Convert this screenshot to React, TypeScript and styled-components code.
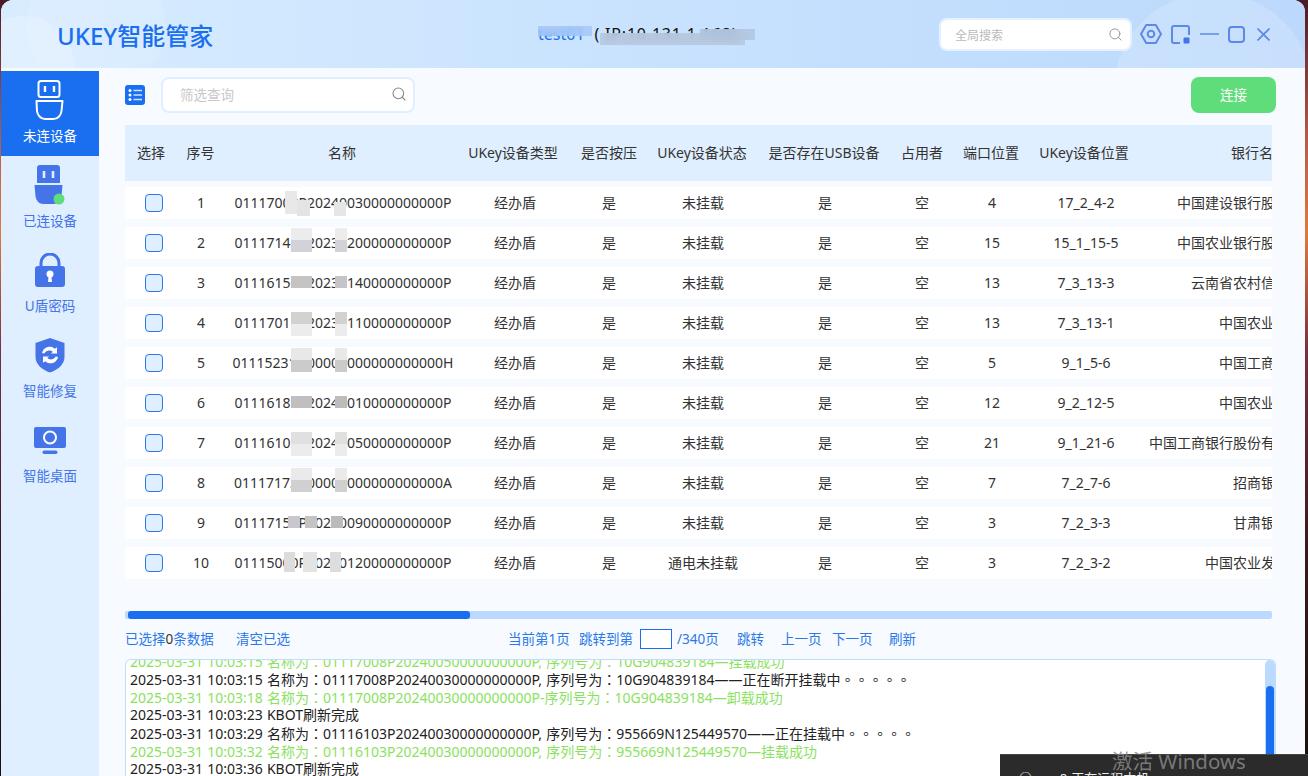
import styled, { createGlobalStyle } from "styled-components";
import { Search } from "lucide-react";

const BLUE = "#1a6ff0";
const ICON = "#4474e8";
const PALE = "#e0efff";
const FONT = `"Noto Sans", "Noto Sans CJK SC", sans-serif`;
const HEAD_COLUMNS = "52px 47px 236px 106px 86px 100px 144px 52px 86px 100px 250px";
const ROW_COLUMNS = "52px 48px 236px 108px 80px 108px 136px 58px 82px 106px 244px";

const GlobalStyle = createGlobalStyle`
  html, body { margin: 0; padding: 0; }
  body { font-family: ${FONT}; font-size: 14px; color: #333; overflow: hidden; }
`;

const Desktop = styled.div`
  position: relative;
  width: 1308px;
  height: 776px;
  overflow: hidden;
  padding: 0 3px 0 1px;
  box-sizing: border-box;
  background: linear-gradient(180deg, #4a1a28 0%, #b85a4a 18%, #e07a3a 30%, #7a3040 45%, #3a1a20 70%, #1a1008 100%);
`;

const AppWindow = styled.div`
  display: flex;
  flex-direction: column;
  height: 100%;
  overflow: hidden;
  border-radius: 12px 12px 0 0;
  background: #f7fbff;
`;

const Header = styled.header`
  flex: 0 0 68px;
  display: flex;
  align-items: center;
  padding-left: 56px;
  background:
    radial-gradient(circle 100px at 1212px 92px, rgba(255, 255, 255, 0.16) 99%, transparent),
    radial-gradient(circle 52px at 22px 68px, rgba(255, 255, 255, 0.2) 99%, transparent),
    radial-gradient(circle 70px at 95px 26px, rgba(255, 255, 255, 0.12) 99%, transparent),
    linear-gradient(90deg, #d8ecff 0%, #c8e2fe 50%, #bcd9fc 100%);
`;

const Logo = styled.div`
  width: 481px;
  font-size: 24px;
  font-weight: 500;
  color: ${BLUE};
  white-space: nowrap;
`;

const HostTitle = styled.div`
  position: relative;
  width: 401px;
  font-size: 16px;
  line-height: 22px;
  color: #111;
  white-space: nowrap;
  span { color: ${BLUE}; margin-right: 10px; }
  em { font-style: normal; letter-spacing: 0.8px; }
`;

const TitleBlur = styled.i<{ $x: number; $y: number; $w: number; $h: number; $c: string }>`
  position: absolute;
  left: ${(p) => p.$x}px;
  top: ${(p) => p.$y}px;
  width: ${(p) => p.$w}px;
  height: ${(p) => p.$h}px;
  background: ${(p) => p.$c};
  backdrop-filter: blur(3px);
`;

const WindowTools = styled.div`
  display: flex;
  align-items: center;
`;

const GlobalSearch = styled.div`
  box-sizing: border-box;
  width: 193px;
  height: 33px;
  display: flex;
  align-items: center;
  justify-content: space-between;
  padding: 0 7px 0 14px;
  margin-top: 1px;
  margin-right: 8px;
  background: #fff;
  border: 2px solid #e6f1ff;
  border-radius: 8px;
  font-size: 12px;
  color: #bbb;
`;

const TopIcon = styled.svg<{ $mr: number }>`
  display: block;
  margin-right: ${(p) => p.$mr}px;
  fill: none;
  stroke: #5b88ea;
  stroke-width: 2;
`;

const Body = styled.div`
  flex: 1;
  display: flex;
  min-height: 0;
`;

const Sidebar = styled.nav`
  flex: 0 0 98px;
  margin-top: 3px;
  background: ${PALE};
`;

const NavItem = styled.div<{ $active?: boolean }>`
  height: 85px;
  display: grid;
  grid-template-rows: 58px auto;
  align-content: start;
  justify-items: center;
  align-items: center;
  font-size: 13.5px;
  line-height: 14px;
  color: ${(p) => (p.$active ? "#fff" : ICON)};
  background: ${(p) => (p.$active ? BLUE : "transparent")};
`;

const Main = styled.main`
  flex: 1;
  min-width: 0;
  padding: 9px 0 0 26px;
`;

const Toolbar = styled.div`
  width: 1151px;
  height: 36px;
  display: flex;
  align-items: center;
  gap: 16px;
`;

const FilterSearch = styled.div`
  box-sizing: border-box;
  width: 254px;
  height: 36px;
  display: flex;
  align-items: center;
  justify-content: space-between;
  padding: 0 6px 2px 17px;
  background: #fff;
  border: 2px solid ${PALE};
  border-radius: 8px;
  color: #c8c8c8;
  font-size: 13.5px;
`;

const ConnectButton = styled.button`
  margin-left: auto;
  width: 85px;
  height: 36px;
  padding: 0 0 2px;
  border: 0;
  border-radius: 8px;
  background: #5fdd7b;
  color: #fff;
  font-family: ${FONT};
  font-size: 13.5px;
`;

const TableClip = styled.div`
  width: 1147px;
  margin-top: 12px;
  overflow: hidden;
`;

const HeadRow = styled.div`
  width: 1259px;
  height: 56px;
  display: grid;
  grid-template-columns: ${HEAD_COLUMNS};
  align-items: center;
  justify-items: center;
  background: ${PALE};
  margin-bottom: 6px;
  white-space: nowrap;
  span { padding-bottom: 2px; }
`;

const Row = styled.div`
  position: relative;
  width: 1259px;
  height: 32px;
  display: grid;
  grid-template-columns: ${ROW_COLUMNS};
  align-items: center;
  justify-items: center;
  background: #fff;
  margin-bottom: 8px;
  white-space: nowrap;
  span { padding-bottom: 2px; }
`;

const Check = styled.input.attrs({ type: "checkbox" })`
  appearance: none;
  box-sizing: border-box;
  width: 18px;
  height: 18px;
  margin: 0 0 0 6px;
  background: ${PALE};
  border: 1.5px solid #2a78e8;
  border-radius: 4px;
`;

const Smudge = styled.i<{ $x: number; $y: number; $w: number; $h: number; $c: string }>`
  position: absolute;
  left: ${(p) => p.$x - 125}px;
  top: ${(p) => p.$y}px;
  width: ${(p) => p.$w}px;
  height: ${(p) => p.$h}px;
  background: ${(p) => p.$c};
`;

const HScrollTrack = styled.div`
  width: 1147px;
  height: 8px;
  margin-top: 24px;
  border-radius: 2px;
  background: #bcd9ff;
  padding-left: 3px;
  box-sizing: border-box;
`;

const HScrollThumb = styled.div`
  width: 342px;
  height: 100%;
  border-radius: 3px;
  background: ${BLUE};
`;

const Footer = styled.div`
  height: 20px;
  margin-top: 10px;
  display: flex;
  align-items: center;
  white-space: nowrap;
  color: #2a78e8;
  font-size: 13.5px;
`;

const FooterText = styled.span<{ $w: number }>`
  flex: 0 0 ${(p) => p.$w}px;
  padding-bottom: 2px;
  b { font-weight: 400; color: #333; }
`;

const PageInput = styled.input`
  box-sizing: border-box;
  flex: 0 0 32px;
  width: 32px;
  height: 20px;
  margin-right: 5px;
  border: 1.5px solid ${BLUE};
  background: #fff;
  padding: 0;
`;

const LogPanel = styled.div`
  position: relative;
  box-sizing: border-box;
  width: 1151px;
  height: 120px;
  margin-top: 10px;
  overflow: hidden;
  background: #fff;
  border: 1px solid #c0dcff;
  border-bottom: 0;
  border-radius: 6px 6px 0 0;
`;

const LogList = styled.div`
  margin: -8px 0 0 4px;
  white-space: nowrap;
  word-spacing: 0.5px;
`;

const LogLine = styled.div<{ $ok?: boolean }>`
  height: 18px;
  line-height: 18px;
  font-size: 14px;
  color: ${(p) => (p.$ok ? "#8ae25f" : "#222")};
`;

// 全角标点在参考图里是居中的，繁中字形才是这样
const Mark = styled.span`
  font-family: "Noto Sans CJK TC", sans-serif;
`;

const LogTrack = styled.div`
  position: absolute;
  top: 0;
  right: 0;
  bottom: 0;
  width: 10px;
  background: #bcd9ff;
  border-radius: 5px 5px 0 0;
`;

const LogThumb = styled.div`
  position: absolute;
  top: 26px;
  left: 1px;
  right: 1px;
  bottom: 0;
  border-radius: 4px;
  background: ${BLUE};
`;

const RemoteToast = styled.div`
  position: absolute;
  left: 1000px;
  right: 0;
  top: 754px;
  bottom: 0;
  overflow: hidden;
  padding: 13px 0 0 19px;
  background: #2b2b2b;
  border-top: 1px solid #444;
  box-sizing: border-box;
  color: #eee;
  font-size: 13px;
  line-height: 20px;
  word-spacing: 7px;
`;

const Watermark = styled.div`
  position: absolute;
  left: 1112px;
  top: 747px;
  font-size: 20.5px;
  line-height: 28px;
  color: rgba(136, 136, 136, 0.85);
  white-space: nowrap;
  pointer-events: none;
`;

function PlugOutline() {
  return (
    <svg width="34" height="42" viewBox="0 0 34 42" fill="none" stroke="#fff" strokeWidth="2">
      <rect x="5.5" y="2" width="21" height="16" rx="2.5" />
      <path d="M12 7v6M21 7v6" strokeWidth="2.4" />
      <path d="M3.5 22h26l-1 10c-.4 4-3.4 8-8 8h-8.5c-4.5 0-7.500-4-8-8z" strokeLinejoin="round" />
    </svg>
  );
}

function PlugFilled() {
  return (
    <svg width="36" height="42" viewBox="0 0 36 42">
      <path d="M8 1h17a3 3 0 0 1 3 3v15H5V4a3 3 0 0 1 3-3z" fill={ICON} />
      <path d="M12 7v7M21 7v7" stroke="#e0efff" strokeWidth="2.6" />
      <path d="M2.500 21h28l-1 11c-.4 4.500-3.500 8-8 8h-10c-4.500 0-7.500-3.500-8-8z" fill={ICON} />
      <circle cx="27" cy="35" r="5.500" fill="#5fdd7b" />
    </svg>
  );
}

function LockIcon() {
  return (
    <svg width="30" height="35" viewBox="0 0 30 35">
      <path d="M6 15V10a9 9 0 0 1 18 0v5" fill="none" stroke={ICON} strokeWidth="3" />
      <rect y="13" width="30" height="21" rx="3" fill={ICON} />
      <circle cx="15" cy="21" r="3.500" fill="#fff" />
      <path d="M13.700 22h2.600l.7 7h-4z" fill="#fff" />
    </svg>
  );
}

function ShieldIcon() {
  return (
    <svg width="30" height="35" viewBox="0 0 30 35">
      <path d="M15 0l14.500 5v14c0 7.500-7 13-14.500 15.500C7.500 32 .500 26.500.500 19V5z" fill={ICON} />
      <path d="M7 15c1-4.500 5-7 9-6.200 1.500.3 2.800 1 3.800 2l2.200-1.500v6.200h-6.200l2-1.600c-2.500-2.300-6.800-1.500-8.500 1.600z" fill="#fff" />
      <path d="M23 19c-1 4.500-5 7-9 6.200-1.500-.3-2.800-1-3.800-2L8 24.700v-6.200h6.200l-2 1.600c2.500 2.300 6.800 1.500 8.500-1.600z" fill="#fff" />
    </svg>
  );
}

function MonitorIcon() {
  return (
    <svg width="32" height="27" viewBox="0 0 32 27">
      <rect width="32" height="21" rx="2" fill={ICON} />
      <circle cx="16" cy="10.500" r="6" fill="none" stroke="#fff" strokeWidth="2" />
      <rect x="8.500" y="23.500" width="15" height="3.500" rx="1.700" fill={ICON} />
    </svg>
  );
}

function ListIcon() {
  return (
    <svg width="20" height="20" viewBox="0 0 20 20">
      <rect width="20" height="20" rx="3" fill={BLUE} />
      <circle cx="5" cy="5.500" r="1.500" fill="#fff" />
      <circle cx="5" cy="10" r="1.500" fill="#fff" />
      <circle cx="5" cy="14.500" r="1.500" fill="#fff" />
      <path d="M8.500 5.500H17M8.500 10H17M8.500 14.500H17" stroke="#cfe2ff" strokeWidth="1.600" />
    </svg>
  );
}

const HEADERS = ["选择", "序号", "名称", "UKey设备类型", "是否按压", "UKey设备状态", "是否存在USB设备", "占用者", "端口位置", "UKey设备位置", "银行名称"];

const ROWS = [
  ["01117008P20240030000000000P", "未挂载", "4", "17_2_4-2", "中国建设银行股份有限公司"],
  ["01117142P20230200000000000P", "未挂载", "15", "15_1_15-5", "中国农业银行股份有限公司"],
  ["01116150P20230140000000000P", "未挂载", "13", "7_3_13-3", "云南省农村信用社联合"],
  ["01117018P20230110000000000P", "未挂载", "13", "7_3_13-1", "中国农业银行"],
  ["01115231H00000000000000000H", "未挂载", "5", "9_1_5-6", "中国工商银行"],
  ["01116189P20240010000000000P", "未挂载", "12", "9_2_12-5", "中国农业银行"],
  ["01116102P20240050000000000P", "未挂载", "21", "9_1_21-6", "中国工商银行股份有限公司云南分行"],
  ["01117173A00000000000000000A", "未挂载", "7", "7_2_7-6", "招商银行"],
  ["01117158P20240090000000000P", "未挂载", "3", "7_2_3-3", "甘肃银行"],
  ["01115000P20240120000000000P", "通电未挂载", "3", "7_2_3-2", "中国农业发展银行"],
];

// 名称列里打码的色块：[x, 行内 y, 宽, 高, 颜色]
type Patch = [number, number, number, number, string];
const wide = (top: string, bottom: string, y = 1): Patch[] => [
  [291, y, 21, 12, top],
  [291, y + 12, 21, 12, bottom],
  [335, y, 12, 12, top],
  [335, y + 12, 12, 12, bottom],
];
const PATCHES: Patch[][] = [
  [[285, 4, 12, 23, "#e8e8e8"], [297, 13, 13, 16, "#e4e4e4"], [334, 15, 12, 14, "#e6e6e6"]],
  wide("#ececec", "#d2d2d8"),
  [[291, 9, 21, 12, "#c6c4c2"], [335, 9, 12, 12, "#c5c5c8"]],
  wide("#d2d2d0", "#ececec", 5),
  wide("#e8e8e8", "#cbcbcb"),
  [[291, 9, 21, 12, "#c0bebe"], [335, 9, 12, 12, "#bdbcbc"]],
  wide("#e0e0e0", "#ececec", 5),
  wide("#eaeaea", "#d0d0d0"),
  [[288, 9, 12, 12, "#c8c8cc"], [305, 9, 12, 12, "#c4c4c4"], [331, 9, 12, 12, "#bbbbbb"]],
  [[284, 5, 11, 20, "#dcdcdc"], [303, 5, 14, 20, "#e4e4e4"], [330, 5, 11, 20, "#dddddd"]],
];

const NAV = [
  { label: "未连设备", icon: <PlugOutline />, active: true },
  { label: "已连设备", icon: <PlugFilled /> },
  { label: "U盾密码", icon: <LockIcon /> },
  { label: "智能修复", icon: <ShieldIcon /> },
  { label: "智能桌面", icon: <MonitorIcon /> },
];

const FOOTER_ITEMS: [string, number][] = [
  ["当前第1页", 71],
  ["跳转到第", 61],
];
const FOOTER_LINKS: [string, number][] = [
  ["/340页", 60],
  ["跳转", 44],
  ["上一页", 51],
  ["下一页", 57],
  ["刷新", 40],
];

const COLON = <Mark>：</Mark>;
const DOTS = <Mark>。。。。。</Mark>;

export default function App() {
  return (
    <>
      <GlobalStyle />
      <Desktop>
        <AppWindow>
          <Header>
            <Logo>UKEY智能管家</Logo>
            <HostTitle>
              <span>test01</span>
              <em>( IP:10.131.1.168)</em>
              <TitleBlur $x={0} $y={3} $w={54} $h={10} $c="rgba(160,196,245,.75)" />
              <TitleBlur $x={62} $y={10} $w={145} $h={12} $c="rgba(182,199,222,.85)" />
              <TitleBlur $x={162} $y={6} $w={55} $h={11} $c="rgba(176,196,222,.85)" />
            </HostTitle>
            <WindowTools>
              <GlobalSearch>
                全局搜索
                <Search size={15} color="#999" strokeWidth={1.6} />
              </GlobalSearch>
              <TopIcon $mr={9} width="22" height="20" viewBox="0 0 22 20">
                <path d="M6.200 1h9.600L21 10l-5.200 9H6.200L1 10z" strokeLinejoin="round" />
                <circle cx="11" cy="10" r="3.300" />
              </TopIcon>
              <TopIcon $mr={10} width="19" height="19" viewBox="0 0 19 19">
                <path d="M9 18H3a2 2 0 0 1-2-2V3a2 2 0 0 1 2-2h13a2 2 0 0 1 2 2v7" />
                <rect x="12.500" y="12.500" width="6" height="6" rx="1" fill="#4474e8" stroke="none" />
              </TopIcon>
              <TopIcon $mr={9} width="19" height="2" viewBox="0 0 19 2">
                <path d="M0 1h19" strokeWidth="1.500" />
              </TopIcon>
              <TopIcon $mr={12} width="17" height="17" viewBox="0 0 17 17">
                <rect x="1" y="1" width="15" height="15" rx="3" />
              </TopIcon>
              <TopIcon $mr={0} width="13" height="13" viewBox="0 0 13 13">
                <path d="M.500.500l12 12M12.500.500l-12 12" strokeWidth="1.700" />
              </TopIcon>
            </WindowTools>
          </Header>

          <Body>
            <Sidebar>
              {NAV.map((item) => (
                <NavItem key={item.label} $active={item.active}>
                  {item.icon}
                  <span>{item.label}</span>
                </NavItem>
              ))}
            </Sidebar>

            <Main>
              <Toolbar>
                <ListIcon />
                <FilterSearch>
                  筛选查询
                  <Search size={16} color="#888" strokeWidth={1.6} />
                </FilterSearch>
                <ConnectButton>连接</ConnectButton>
              </Toolbar>

              <TableClip>
                <HeadRow>
                  {HEADERS.map((h) => (
                    <span key={h}>{h}</span>
                  ))}
                </HeadRow>
                {ROWS.map((row, i) => (
                  <Row key={row[0]}>
                    <Check />
                    <span>{i + 1}</span>
                    <span>{row[0]}</span>
                    <span>经办盾</span>
                    <span>是</span>
                    <span>{row[1]}</span>
                    <span>是</span>
                    <span>空</span>
                    <span>{row[2]}</span>
                    <span>{row[3]}</span>
                    <span>{row[4]}</span>
                    {PATCHES[i].map(([x, y, w, h, c]) => (
                      <Smudge key={`${x}-${y}`} $x={x} $y={y} $w={w} $h={h} $c={c} />
                    ))}
                  </Row>
                ))}
              </TableClip>

              <HScrollTrack>
                <HScrollThumb />
              </HScrollTrack>

              <Footer>
                <FooterText $w={111}>
                  已选择<b>0</b>条数据
                </FooterText>
                <FooterText $w={272}>清空已选</FooterText>
                {FOOTER_ITEMS.map(([text, w]) => (
                  <FooterText key={text} $w={w}>
                    {text}
                  </FooterText>
                ))}
                <PageInput />
                {FOOTER_LINKS.map(([text, w]) => (
                  <FooterText key={text} $w={w}>
                    {text}
                  </FooterText>
                ))}
              </Footer>

              <LogPanel>
                <LogList>
                  <LogLine $ok>2025-03-31 10:03:15 名称为{COLON}01117008P20240050000000000P, 序列号为{COLON}10G904839184—挂载成功</LogLine>
                  <LogLine>2025-03-31 10:03:15 名称为{COLON}01117008P20240030000000000P, 序列号为{COLON}10G904839184——正在断开挂载中{DOTS}</LogLine>
                  <LogLine $ok>2025-03-31 10:03:18 名称为{COLON}01117008P20240030000000000P-序列号为{COLON}10G904839184—卸载成功</LogLine>
                  <LogLine>2025-03-31 10:03:23 KBOT刷新完成</LogLine>
                  <LogLine>2025-03-31 10:03:29 名称为{COLON}01116103P20240030000000000P, 序列号为{COLON}955669N125449570——正在挂载中{DOTS}</LogLine>
                  <LogLine $ok>2025-03-31 10:03:32 名称为{COLON}01116103P20240030000000000P, 序列号为{COLON}955669N125449570—挂载成功</LogLine>
                  <LogLine>2025-03-31 10:03:36 KBOT刷新完成</LogLine>
                </LogList>
                <LogTrack>
                  <LogThumb />
                </LogTrack>
              </LogPanel>
            </Main>
          </Body>
        </AppWindow>

        <RemoteToast>○ ·· 8-正在远程本机</RemoteToast>
        <Watermark>激活 Windows</Watermark>
      </Desktop>
    </>
  );
}
